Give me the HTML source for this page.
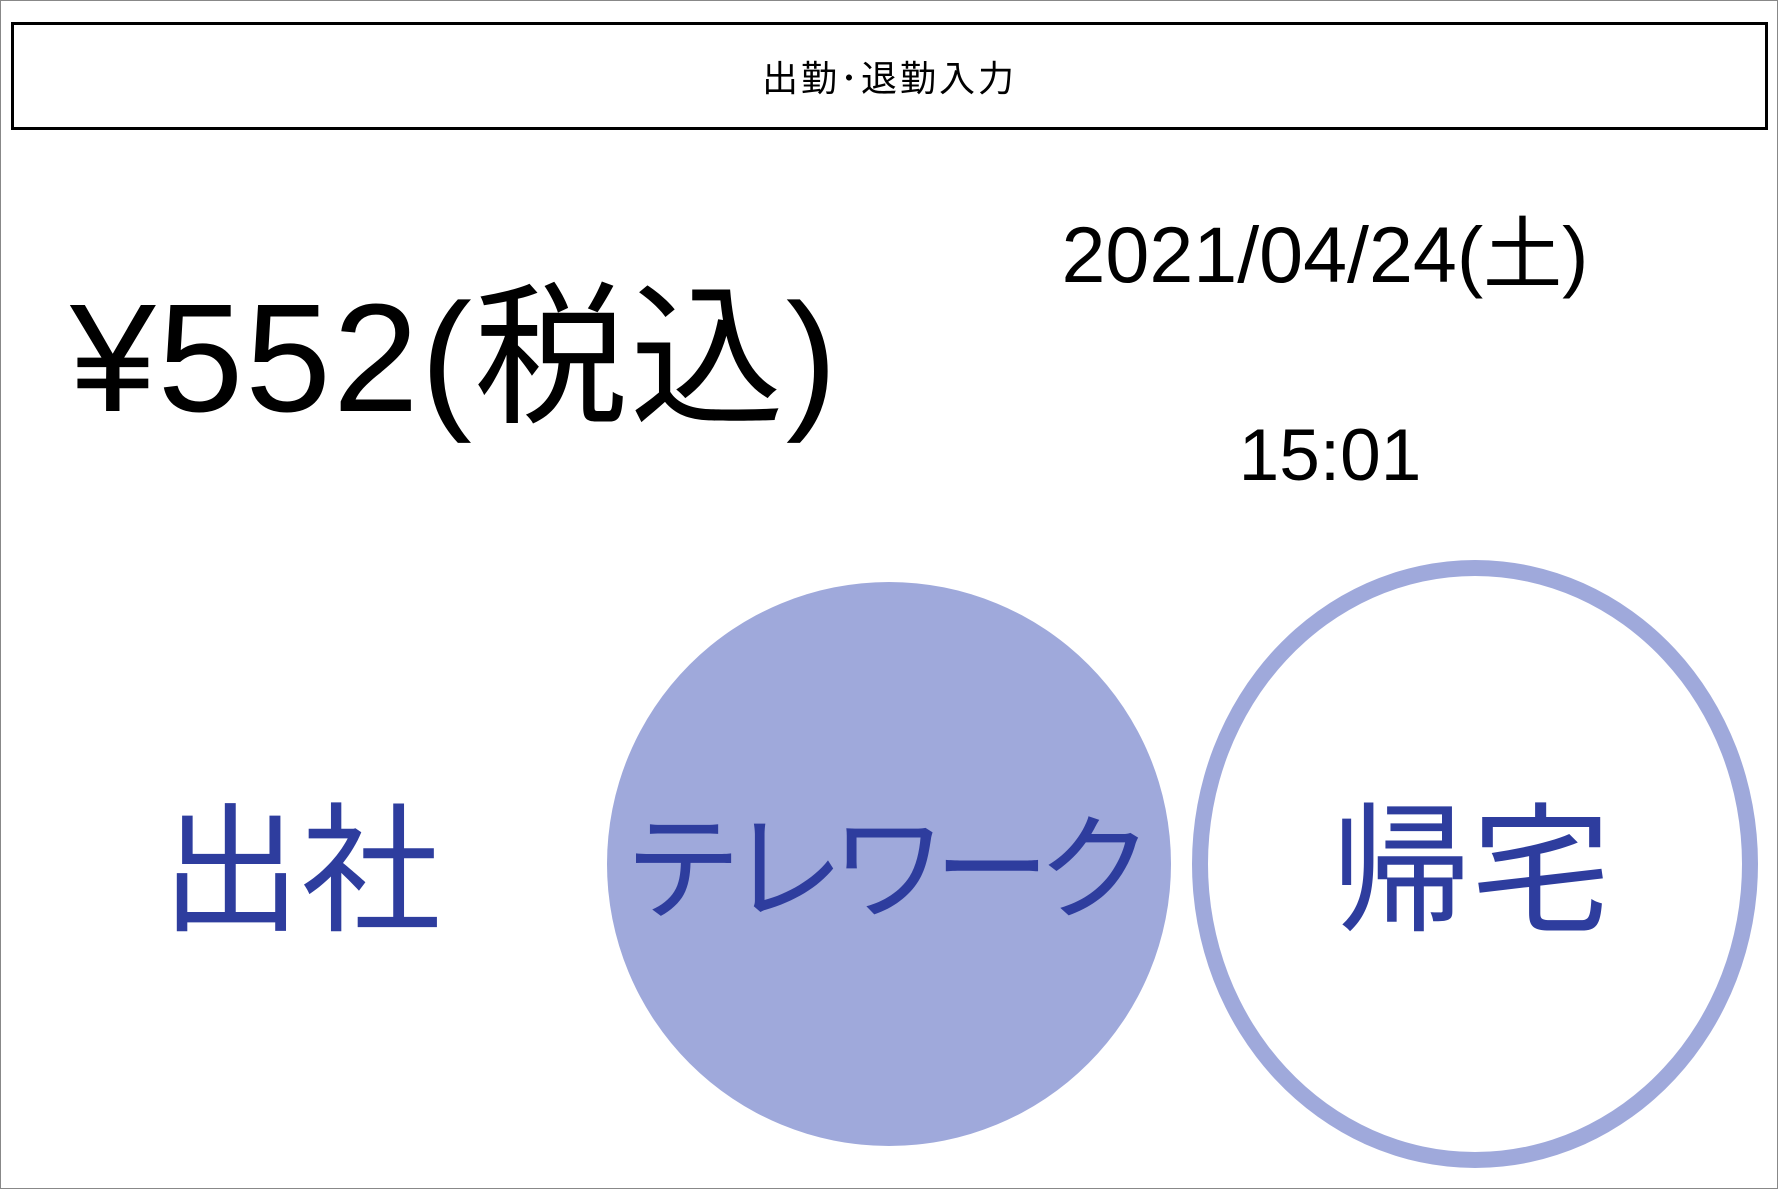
<!DOCTYPE html>
<html><head><meta charset="utf-8"><style>
html,body{margin:0;padding:0;background:#fff;}
body{width:1778px;height:1189px;position:relative;overflow:hidden;font-family:"Liberation Sans","Noto Sans CJK JP",sans-serif;color:#000;}
.frame{position:absolute;left:0;top:0;width:1776px;height:1187px;border:1px solid #888;}
.hdr{position:absolute;left:11px;top:22px;width:1751px;height:102px;border:3px solid #000;display:flex;align-items:center;justify-content:center;font-size:36px;letter-spacing:3px;}
.abs{position:absolute;white-space:nowrap;display:flex;align-items:center;justify-content:center;}
.price{left:70px;top:254px;height:180px;font-size:154px;letter-spacing:2px;}
.date{left:1040px;top:202px;width:570px;height:90px;font-size:79px;}
.time{left:1140px;top:410px;width:380px;height:90px;font-size:73px;}
.c1{position:absolute;left:607px;top:582px;width:564px;height:564px;border-radius:50%;background:#9fa9db;}
.c2{position:absolute;left:1192px;top:560px;width:566px;height:608px;border-radius:50%;box-sizing:border-box;border:16px solid #9fa9db;}
.btn{color:#2e3d9e;height:200px;top:760px;}
</style></head><body>
<div class="frame"></div>
<div class="hdr">出勤･退勤入力</div>
<div class="abs price">¥552(税込)</div>
<div class="abs date">2021/04/24(土)</div>
<div class="abs time">15:01</div>
<div class="c1"></div>
<div class="c2"></div>
<div class="abs btn" style="left:151px;width:300px;font-size:140px;">出社</div>
<div class="abs btn" style="left:589px;width:600px;font-size:116px;letter-spacing:-13px;text-indent:-13px;">テレワーク</div>
<div class="abs btn" style="left:1321px;width:300px;font-size:140px;">帰宅</div>
</body></html>
